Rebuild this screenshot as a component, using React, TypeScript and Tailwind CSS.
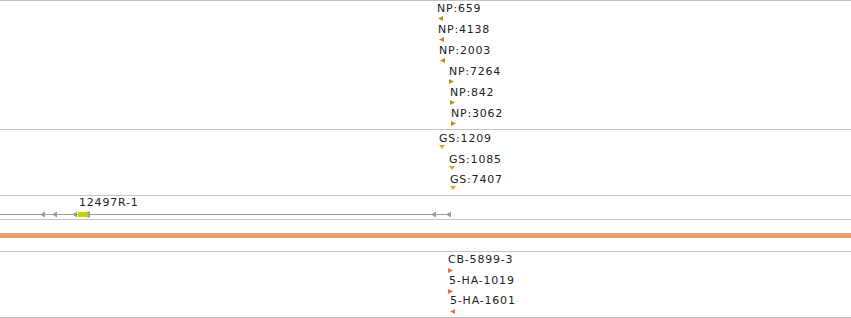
import React from "react";

type Dir = "left" | "right" | "down";

function Tri({ dir, color }: { dir: Dir; color: string }) {
  const pts =
    dir === "left" ? "5,0 5,5 0,2.5" : dir === "right" ? "0,0 0,5 5,2.5" : "0,0 6,0 3,4";
  const w = dir === "down" ? 6 : 5;
  const h = dir === "down" ? 4 : 5;
  return (
    <svg className="block" width={w} height={h} viewBox={`0 0 ${w} ${h}`}>
      <polygon points={pts} fill={color} />
    </svg>
  );
}

type Feat = { tx: number; text: string; px: number; dir: Dir };

const np: Feat[] = [
  { tx: 437, text: "NP:659", px: 438, dir: "left" },
  { tx: 438, text: "NP:4138", px: 439, dir: "left" },
  { tx: 439, text: "NP:2003", px: 440, dir: "left" },
  { tx: 449, text: "NP:7264", px: 449, dir: "right" },
  { tx: 450, text: "NP:842", px: 450, dir: "right" },
  { tx: 451, text: "NP:3062", px: 451, dir: "right" },
];

const gs: Feat[] = [
  { tx: 439, text: "GS:1209", px: 439, dir: "down" },
  { tx: 449, text: "GS:1085", px: 449, dir: "down" },
  { tx: 450, text: "GS:7407", px: 450, dir: "down" },
];

const cb: Feat[] = [
  { tx: 448, text: "CB-5899-3", px: 448, dir: "right" },
  { tx: 449, text: "5-HA-1019", px: 448, dir: "right" },
  { tx: 450, text: "5-HA-1601", px: 450, dir: "left" },
];

function FeatureRow({
  f,
  color,
  rowH,
  triGap,
}: {
  f: Feat;
  color: string;
  rowH: string;
  triGap: string;
}) {
  return (
    <div className={`flex shrink-0 flex-col ${rowH} ${triGap}`}>
      <span
        className="whitespace-nowrap text-[11px] leading-[10px] tracking-[0.8px] text-[#222]"
        style={{ paddingLeft: f.tx }}
      >
        {f.text}
      </span>
      <div style={{ paddingLeft: f.px }}>
        <Tri dir={f.dir} color={color} />
      </div>
    </div>
  );
}

export default function App() {
  return (
    <div
      className="flex h-[318px] w-[851px] flex-col overflow-hidden border-t border-[#c4c4c4] bg-white"
      style={{ fontFamily: '"DejaVu Sans", sans-serif' }}
    >
      <div className="flex h-[129px] shrink-0 flex-col overflow-hidden border-b border-[#c4c4c4] pt-[3px]">
        {np.map((f) => (
          <FeatureRow key={f.text} f={f} color="#c38d0e" rowH="h-[21px]" triGap="gap-[2px]" />
        ))}
      </div>
      <div className="flex h-[66px] shrink-0 flex-col overflow-hidden border-b border-[#c4c4c4] pt-[4px]">
        {gs.map((f) => (
          <FeatureRow key={f.text} f={f} color="#eda224" rowH="h-[20.5px]" triGap="gap-[1px]" />
        ))}
      </div>
      <div className="relative h-[24px] shrink-0 border-b border-[#c4c4c4]">
        <span className="absolute left-[79px] top-[2px] whitespace-nowrap text-[11px] leading-[10px] tracking-[0.8px] text-[#222]">
          12497R-1
        </span>
        <svg className="absolute left-0 top-0" width="851" height="23">
          <line x1="0" y1="18.5" x2="451" y2="18.5" stroke="#9c9c9c" strokeWidth="1" />
          <polygon points="45,15.5 45,21.5 40,18.5" fill="#9c9c9c" />
          <polygon points="57,15.5 57,21.5 52,18.5" fill="#9c9c9c" />
          <polygon points="77,15.5 77,21.5 72,18.5" fill="#9c9c9c" />
          <rect x="87" y="15.5" width="3" height="6" fill="#9c9c9c" />
          <rect x="78" y="16" width="10" height="5" fill="#c6d300" />
          <polygon points="82,15.5 82,21.5 77,18.5" fill="#c6d300" />
          <polygon points="436,15.5 436,21.5 431,18.5" fill="#9c9c9c" />
          <polygon points="451,15.5 451,21.5 446,18.5" fill="#9c9c9c" />
        </svg>
      </div>
      <div className="flex h-[32px] shrink-0 items-center border-b border-[#c4c4c4]">
        <div className="h-[5px] w-full bg-[#f0a070]" />
      </div>
      <div className="flex h-[66px] shrink-0 flex-col overflow-hidden border-b border-[#c4c4c4] pt-[3px]">
        {cb.map((f) => (
          <FeatureRow key={f.text} f={f} color="#f26a40" rowH="h-[20.5px]" triGap="gap-[3px]" />
        ))}
      </div>
    </div>
  );
}
